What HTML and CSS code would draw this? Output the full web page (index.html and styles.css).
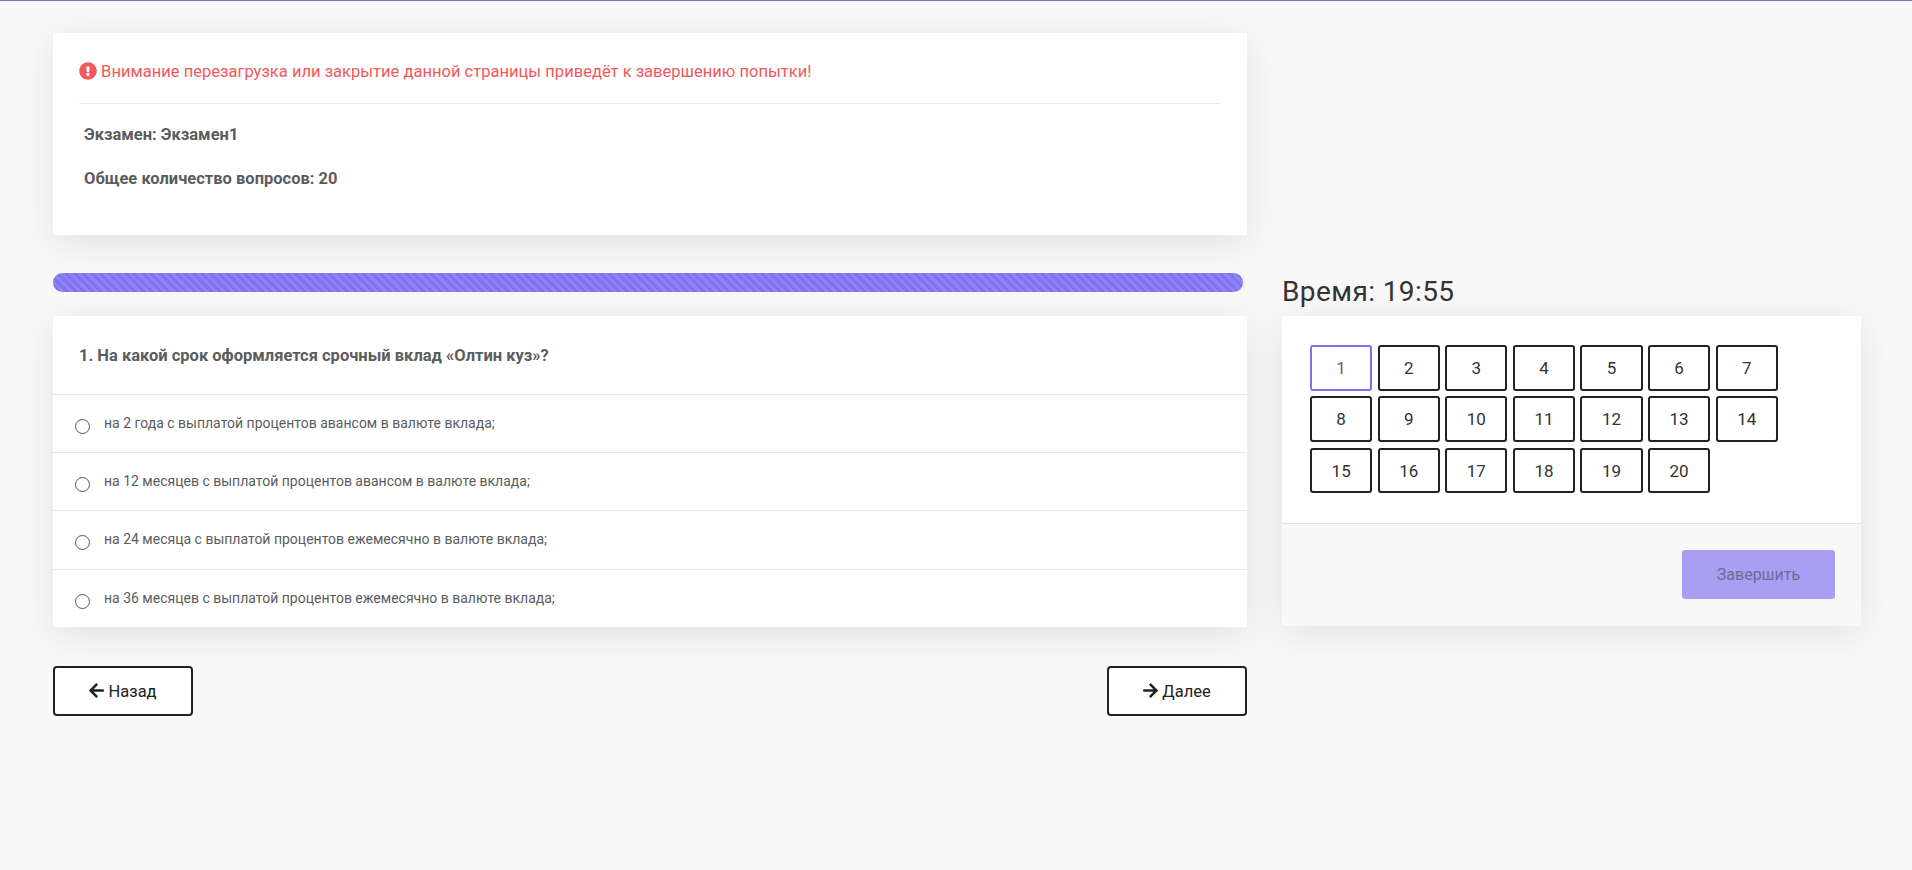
FILE: index.html
```html
<!DOCTYPE html>
<html lang="ru">
<head>
    <meta charset="UTF-8">
    <meta name="viewport" content="width=device-width, initial-scale=1.0">
    <title>Экзамен</title>
    <link rel="stylesheet" href="styles.css">
</head>
<body>
    <main class="exam">
        <section class="card info">
            <p class="warning">
                <svg class="warning-icon" viewBox="0 0 512 512"><path d="M504 256c0 136.997-111.043 248-248 248S8 392.997 8 256C8 119.083 119.043 8 256 8s248 111.083 248 248zm-248 50c-25.405 0-46 20.595-46 46s20.595 46 46 46 46-20.595 46-46-20.595-46-46-46zm-43.673-165.346l7.418 136c.347 6.364 5.609 11.346 11.982 11.346h48.546c6.373 0 11.635-4.982 11.982-11.346l7.418-136c.375-6.874-5.098-12.654-11.982-12.654h-63.383c-6.884 0-12.356 5.78-11.981 12.654z"/></svg>
                Внимание перезагрузка или закрытие данной страницы приведёт к завершению попытки!
            </p>
            <p class="info-line first">Экзамен: Экзамен1</p>
            <p class="info-line">Общее количество вопросов: 20</p>
        </section>
        <div class="spacer"></div>

        <div class="progress"><div class="progress-bar"></div></div>
        <h2 class="timer">Время: 19:55</h2>

        <section class="card question">
            <h3 class="question-title">1. На какой срок оформляется срочный вклад «Олтин куз»?</h3>
            <label class="answer"><span class="radio"></span><span>на 2 года с выплатой процентов авансом в валюте вклада;</span></label>
            <label class="answer"><span class="radio"></span><span>на 12 месяцев с выплатой процентов авансом в валюте вклада;</span></label>
            <label class="answer"><span class="radio"></span><span>на 24 месяца с выплатой процентов ежемесячно в валюте вклада;</span></label>
            <label class="answer"><span class="radio"></span><span>на 36 месяцев с выплатой процентов ежемесячно в валюте вклада;</span></label>
        </section>

        <aside class="card panel">
            <div class="numbers">
                <button class="num current">1</button>
                <button class="num">2</button>
                <button class="num">3</button>
                <button class="num">4</button>
                <button class="num">5</button>
                <button class="num">6</button>
                <button class="num">7</button>
                <button class="num">8</button>
                <button class="num">9</button>
                <button class="num">10</button>
                <button class="num">11</button>
                <button class="num">12</button>
                <button class="num">13</button>
                <button class="num">14</button>
                <button class="num">15</button>
                <button class="num">16</button>
                <button class="num">17</button>
                <button class="num">18</button>
                <button class="num">19</button>
                <button class="num">20</button>
            </div>
            <div class="panel-footer">
                <button class="finish">Завершить</button>
            </div>
        </aside>

        <nav class="nav">
            <button class="nav-btn">
                <svg class="arrow" viewBox="0 0 448 512"><path d="M257.5 445.1l-22.2 22.2c-9.4 9.4-24.6 9.4-33.9 0L7 273c-9.4-9.4-9.4-24.6 0-33.9L201.4 44.7c9.4-9.4 24.6-9.4 33.9 0l22.2 22.2c9.5 9.5 9.3 25-.4 34.3L136.6 216H424c13.3 0 24 10.7 24 24v32c0 13.3-10.7 24-24 24H136.6l120.5 114.8c9.8 9.3 10 24.8.4 34.3z"/></svg>
                Назад
            </button>
            <button class="nav-btn">
                <svg class="arrow" viewBox="0 0 448 512"><path d="M190.5 66.9l22.2-22.2c9.4-9.4 24.6-9.4 33.9 0L441 239c9.4 9.4 9.4 24.6 0 33.9L246.6 467.3c-9.4 9.4-24.6 9.4-33.9 0l-22.2-22.2c-9.5-9.5-9.3-25 .4-34.3L311.4 296H24c-13.3 0-24-10.7-24-24v-32c0-13.3 10.7-24 24-24h287.4L190.9 101.2c-9.8-9.3-10-24.8-.4-34.3z"/></svg>
                Далее
            </button>
        </nav>
    </main>
</body>
</html>
```

FILE: styles.css
```css
* {
    box-sizing: border-box;
}
body {
    margin: 0;
    min-height: 870px;
    background: #f8f8f8;
    border-top: 1px solid #9069c0;
    font-family: Roboto, "Noto Sans", sans-serif;
    color: #5c5c5c;
}
.exam {
    display: grid;
    grid-template-columns: 1194px 579px;
    column-gap: 35px;
    padding: 32px 0 0 53px;
}
.card {
    background: #fff;
    box-shadow: 0 8px 36px rgba(0, 0, 0, 0.09);
}
.info {
    height: 202px;
    padding: 25px 27px 0 26px;
    margin-bottom: 38px;
}
.warning {
    margin: 0;
    padding-bottom: 18px;
    border-bottom: 1px solid #e8e8e8;
    color: #f1595c;
    font-size: 16.5px;
    line-height: 27px;
    letter-spacing: 0.02px;
}
.warning-icon {
    width: 18px;
    height: 18px;
    fill: #f1595c;
    vertical-align: -3px;
}
.info-line {
    margin: 0 0 0 5px;
    padding-top: 24px;
    font-size: 16.5px;
    font-weight: 700;
    line-height: 20px;
}
.info-line.first {
    padding-top: 21px;
}
.progress {
    height: 19px;
    border-radius: 10px;
    background: #f2f2f2;
}
.progress-bar {
    width: 1190px;
    height: 100%;
    border-radius: 10px;
    background-image: repeating-linear-gradient(45deg, #8f82f5 0 3px, #8071ef 3px 6px);
}
.timer {
    margin: 0;
    height: 43px;
    color: #333;
    font-size: 28px;
    font-weight: 400;
    line-height: 38px;
    letter-spacing: 0.4px;
}
.question {
    height: 311px;
}
.question-title {
    margin: 0;
    height: 79px;
    padding: 28px 26px 0;
    border-bottom: 1px solid #e8e8e8;
    font-size: 16.5px;
    font-weight: 700;
    line-height: 24px;
}
.answer {
    display: flex;
    align-items: center;
    height: 58.2px;
    padding: 0 0 1px 22px;
    border-bottom: 1px solid #e8e8e8;
    font-size: 14px;
}
.answer:last-child {
    border-bottom: none;
}
.radio {
    width: 15px;
    height: 15px;
    margin: 6px 14px 0 0;
    border: 1px solid #555;
    border-radius: 50%;
}
.panel {
    display: flex;
    flex-direction: column;
    height: 310px;
}
.numbers {
    display: grid;
    grid-template-columns: repeat(7, 62.3px);
    grid-auto-rows: 45.5px;
    gap: 5.9px 5.3px;
    height: 208px;
    padding: 29px 0 0 28px;
    border-bottom: 1px solid #e0e0e0;
}
.num {
    padding: 0;
    background: #fff;
    border: 2px solid #222;
    border-radius: 3px;
    color: #333;
    font-family: inherit;
    font-size: 17px;
}
.num.current {
    border-color: #7f70ee;
    color: #666;
}
.panel-footer {
    flex: 1;
    display: flex;
    justify-content: flex-end;
    padding: 26px 26px 0 0;
    background: #f8f8f8;
}
.finish {
    width: 153px;
    height: 49px;
    background: #a89ff2;
    border: none;
    border-radius: 3px;
    color: #6f6a96;
    font-family: inherit;
    font-size: 16px;
}
.nav {
    display: flex;
    justify-content: space-between;
    width: 1194px;
    margin-top: 39px;
}
.nav-btn {
    width: 140px;
    height: 50px;
    background: #fff;
    border: 2px solid #222;
    border-radius: 4px;
    color: #222;
    font-family: inherit;
    font-size: 16.5px;
}
.arrow {
    width: 15px;
    height: 17px;
    fill: #222;
    vertical-align: -2px;
}
```
